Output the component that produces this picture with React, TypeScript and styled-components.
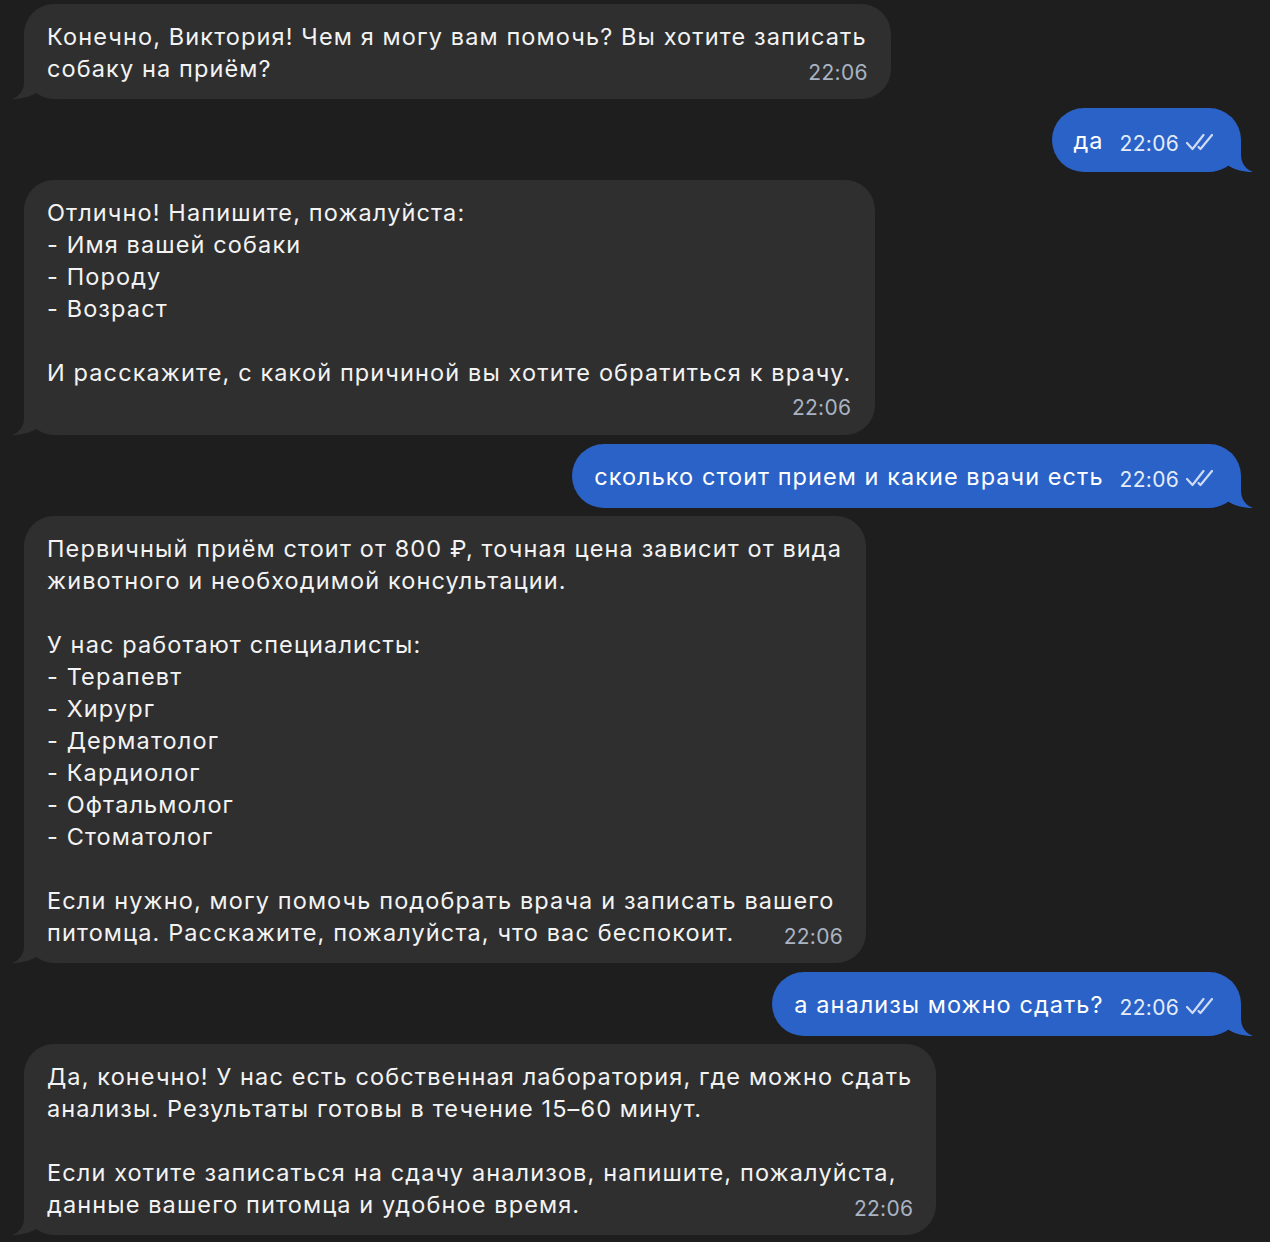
import React from "react";
import styled, { createGlobalStyle } from "styled-components";

const GlobalStyle = createGlobalStyle`
  html, body {
    margin: 0;
    padding: 0;
    background: #1e1e1e;
  }
  body {
    font-family: Inter, "Noto Sans", "DejaVu Sans", sans-serif;
    -webkit-font-smoothing: antialiased;
  }
`;

const Chat = styled.div`
  display: flex;
  flex-direction: column;
  gap: 8.5px;
  padding: 4px 29px 0 24px;
  min-height: 1242px;
  box-sizing: border-box;
  background: #1e1e1e;
`;

const Row = styled.div<{ $out?: boolean }>`
  display: flex;
  justify-content: ${(p) => (p.$out ? "flex-end" : "flex-start")};
`;

const InBubble = styled.div`
  position: relative;
  isolation: isolate;
  display: flow-root;
  max-width: 940px;
  padding: 17px 24px 14px 23px;
  border-radius: 30px;
  background: #2f2f2f;
  color: #f3f3f3;
  font-size: 23.5px;
  line-height: 32px;
  letter-spacing: 1.12px;
  white-space: pre-line;
`;

const OutBubble = styled.div`
  position: relative;
  isolation: isolate;
  display: flex;
  align-items: baseline;
  padding: 17px 26px 14px 22px;
  border-radius: 32px;
  background: #2a62c7;
  color: #ffffff;
  font-size: 23.5px;
  line-height: 32px;
  letter-spacing: 1.05px;
`;

const OutText = styled.span`
  margin-right: 16px;
`;

const Time = styled.span<{ $below?: boolean; $out?: boolean }>`
  font-size: 21px;
  letter-spacing: 0.3px;
  white-space: nowrap;
  color: ${(p) => (p.$out ? "#e4ecfa" : "#a9b3c2")};
  ${(p) =>
    p.$below
      ? `
    display: block;
    text-align: right;
    margin-top: 6px;
    line-height: 26px;
  `
      : p.$out
      ? `
    line-height: 32px;
    transform: translateY(2px);
  `
      : `
    float: right;
    line-height: 32px;
    margin: 3px -1px -3px 14px;
    transform: translateY(1px);
  `}
`;

const Checks = styled.svg`
  margin-left: 6px;
  align-self: center;
  transform: translateY(1px);
`;

const Tail = styled.svg<{ $out?: boolean }>`
  position: absolute;
  bottom: 0;
  z-index: -1;
  ${(p) => (p.$out ? "right: -12px; transform: scaleX(-1);" : "left: -12px;")}
`;

function TailShape({ out, color }: { out?: boolean; color: string }) {
  return (
    <Tail $out={out} width="46" height="32" viewBox="0 0 46 32">
      <path
        d="M12 0 L12 14 C12 23 8 29 0 32 C10 32 19 29.5 26 25 C31 29 37 32 46 32 L46 0 Z"
        fill={color}
      />
    </Tail>
  );
}

function DoubleCheck() {
  return (
    <Checks width="30" height="20" viewBox="0 0 30 20" fill="none">
      <path
        d="M2 11 L7.5 17 L18.5 3"
        stroke="#cddbf4"
        strokeWidth="2.2"
        strokeLinecap="round"
        strokeLinejoin="round"
      />
      <path
        d="M13.5 15 L15.5 17 L27 3"
        stroke="#cddbf4"
        strokeWidth="2.2"
        strokeLinecap="round"
        strokeLinejoin="round"
      />
    </Checks>
  );
}

type Msg = { out?: boolean; text: string; timeBelow?: boolean };

const messages: Msg[] = [
  {
    text: "Конечно, Виктория! Чем я могу вам помочь? Вы хотите записать\nсобаку на приём?",
  },
  { out: true, text: "да" },
  {
    text:
      "Отлично! Напишите, пожалуйста:\n- Имя вашей собаки\n- Породу\n- Возраст\n\nИ расскажите, с какой причиной вы хотите обратиться к врачу.",
    timeBelow: true,
  },
  { out: true, text: "сколько стоит прием и какие врачи есть" },
  {
    text:
      "Первичный приём стоит от 800 ₽, точная цена зависит от вида\nживотного и необходимой консультации.\n\nУ нас работают специалисты:\n- Терапевт\n- Хирург\n- Дерматолог\n- Кардиолог\n- Офтальмолог\n- Стоматолог\n\nЕсли нужно, могу помочь подобрать врача и записать вашего\nпитомца. Расскажите, пожалуйста, что вас беспокоит.",
  },
  { out: true, text: "а анализы можно сдать?" },
  {
    text:
      "Да, конечно! У нас есть собственная лаборатория, где можно сдать\nанализы. Результаты готовы в течение 15–60 минут.\n\nЕсли хотите записаться на сдачу анализов, напишите, пожалуйста,\nданные вашего питомца и удобное время.",
  },
];

export default function App() {
  return (
    <>
      <GlobalStyle />
      <Chat>
        {messages.map((m, i) =>
          m.out ? (
            <Row key={i} $out>
              <OutBubble>
                <TailShape out color="#2a62c7" />
                <OutText>{m.text}</OutText>
                <Time $out>22:06</Time>
                <DoubleCheck />
              </OutBubble>
            </Row>
          ) : (
            <Row key={i}>
              <InBubble>
                <TailShape color="#2f2f2f" />
                {m.text}
                <Time $below={m.timeBelow}>22:06</Time>
              </InBubble>
            </Row>
          )
        )}
      </Chat>
    </>
  );
}
